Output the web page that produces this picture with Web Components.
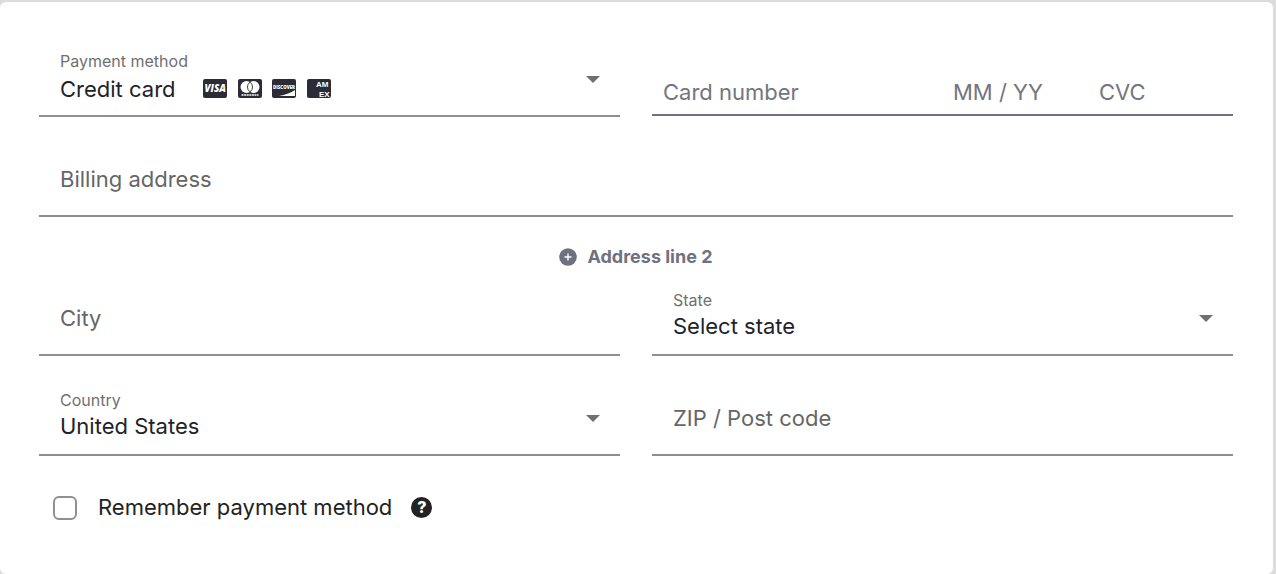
<!DOCTYPE html>
<html lang="en">
<head>
<meta charset="utf-8">
<meta name="viewport" content="width=device-width, initial-scale=1">
<title>Payment method</title>
<style>
  body { margin: 0; background: #dcdcdc; color: #22232a; font: 22px/28px Inter, "Liberation Sans", sans-serif; }
</style>
</head>
<body>
<payment-form></payment-form>
<script>
const define = (name, html, setup) => customElements.define(name, class extends HTMLElement {
  connectedCallback() {
    if (this.shadowRoot) return;
    const template = document.createElement('template');
    template.innerHTML = html;
    this.attachShadow({ mode: 'open' }).append(template.content.cloneNode(true));
    if (setup) setup(this, this.shadowRoot);
  }
});

define('text-field', `
  <style>
    :host { display: block; }
    input { display: block; box-sizing: border-box; width: 100%; height: 76px; margin: 0; padding: 2px 21px 0; border: 0; border-bottom: 2px solid #8f8f8f; border-radius: 0; background: none; color: #22232a; font: inherit; outline: 0; }
    input::placeholder { color: #666; opacity: 1; }
    input:focus { border-color: #22232a; }
  </style>
  <input type="text">`,
  (host, root) => {
    const input = root.querySelector('input');
    input.placeholder = host.getAttribute('label');
    input.setAttribute('aria-label', host.getAttribute('label'));
  });

define('select-field', `
  <style>
    :host { display: block; position: relative; box-sizing: border-box; height: 76px; border-bottom: 2px solid #8f8f8f; padding-top: 10px; --value-height: 32px; }
    label { display: block; padding-left: 21px; font-size: 16px; line-height: 20px; color: #707070; }
    select { display: block; width: 100%; height: var(--value-height); margin: 0; padding: 0 60px 0 21px; border: 0; background: none; appearance: none; color: #22232a; font: inherit; outline: 0; }
    .arrow { position: absolute; right: 20px; top: 35px; width: 14px; height: 7px; fill: #707070; pointer-events: none; }
    slot { display: block; position: absolute; left: 164px; top: 38px; pointer-events: none; }
  </style>
  <label for="choice"></label>
  <select id="choice"><option></option></select>
  <slot></slot>
  <svg class="arrow" viewBox="0 0 14 7" aria-hidden="true"><path d="M0 0h14L7 7z"/></svg>`,
  (host, root) => {
    root.querySelector('label').textContent = host.getAttribute('label');
    root.querySelector('option').textContent = host.getAttribute('value');
  });

define('card-brands', `
  <style>
    :host { display: flex; justify-content: space-between; width: 128px; }
    svg { display: block; width: 24px; height: 19px; overflow: hidden; border-radius: 2px; background: #2b2c35; fill: #fff; }
    text { font-family: "Open Sans", "Liberation Sans", sans-serif; font-weight: 800; }
    .stacked text { font-family: "Liberation Sans", sans-serif; font-weight: 700; }
  </style>
  <svg viewBox="0 0 24 19" role="img" aria-label="Visa"><text x="1.5" y="13.3" font-size="9.8" font-style="italic">VISA</text></svg>
  <svg viewBox="0 0 24 19" role="img" aria-label="Mastercard">
    <circle cx="8.5" cy="8" r="6"/><circle cx="15.5" cy="8" r="6"/>
    <path d="M12 3.1a6 6 0 0 0 0 9.8 6 6 0 0 0 0-9.8z" stroke="#2b2c35" stroke-width=".9"/>
    <path d="M3.5 16h17" stroke="#fff" stroke-width="1.5" stroke-dasharray="2 .6"/>
  </svg>
  <svg viewBox="0 0 24 19" role="img" aria-label="Discover"><text x="1" y="9.5" font-size="4.4">DISCOVER</text><path d="M23 11v6H7q10-2 16-6z"/></svg>
  <svg class="stacked" viewBox="0 0 24 19" role="img" aria-label="American Express"><text x="9" y="8.3" font-size="8">AM</text><text x="12" y="17.6" font-size="8">EX</text></svg>`);

define('card-details', `
  <style>
    :host { display: flex; box-sizing: border-box; height: 75px; padding: 22px 0 0 11px; border-bottom: 2px solid #6f7180; }
    input { box-sizing: border-box; width: 146px; min-width: 0; height: 51px; margin: 0; padding: 6px 0 0; border: 0; background: none; color: #22232a; font: inherit; outline: 0; }
    .number { flex: 1; }
    .code { width: 134px; }
    input::placeholder { color: #737580; opacity: 1; }
  </style>
  <input class="number" type="text" inputmode="numeric" placeholder="Card number" aria-label="Card number">
  <input type="text" inputmode="numeric" placeholder="MM / YY" aria-label="Expiry date">
  <input class="code" type="text" inputmode="numeric" placeholder="CVC" aria-label="Security code">`);

define('add-line-button', `
  <style>
    :host { display: flex; justify-content: center; }
    button { display: flex; align-items: center; gap: 10px; height: 32px; margin: 0; padding: 0; border: 0; background: none; color: #6f7180; font: inherit; font-size: 18px; font-weight: 700; cursor: pointer; }
    svg { width: 18px; height: 18px; }
  </style>
  <button type="button">
    <svg viewBox="0 0 18 18" aria-hidden="true"><circle cx="9" cy="9" r="8.8" fill="#6f7180"/><path d="M9 5.5v7M5.5 9h7" stroke="#fff" stroke-width="1.4"/></svg>
    <slot></slot>
  </button>`);

define('remember-option', `
  <style>
    :host { display: flex; align-items: center; height: 32px; padding-left: 14px; }
    input { appearance: none; box-sizing: border-box; flex: none; width: 24px; height: 24px; margin: 0; border: 2px solid #8f8f96; border-radius: 6px; background: #fff; }
    input:checked { background: #22232a; }
    label { padding: 0 0 2px 21px; color: #222; }
    button { display: block; margin: 0 0 2px 19px; padding: 0; border: 0; border-radius: 50%; width: 21px; height: 21px; background: #222; color: #fff; font: inherit; font-size: 16px; font-weight: 800; line-height: 21px; text-align: center; }
  </style>
  <input type="checkbox" id="remember"><label for="remember"><slot></slot></label>
  <button type="button" aria-label="About remembering payment methods">?</button>`);

define('payment-form', `
  <style>
    :host { display: flex; box-sizing: border-box; min-height: 100vh; padding: 2px 3px 0 0; }
    form { flex: 1; min-width: 0; box-sizing: border-box; display: grid; grid-template-columns: 1fr 1fr; align-content: start; column-gap: 32px; padding: 39px 40px 24px 39px; border-radius: 6px; background: #fff; }
    text-field, select-field, card-details { margin-bottom: 24px; }
    .wide { grid-column: 1 / -1; }
    add-line-button { margin-bottom: 7px; }
    remember-option { margin-top: 12px; }
    .method { --value-height: 36px; }
  </style>
  <form>
    <select-field class="method" label="Payment method" value="Credit card"><card-brands></card-brands></select-field>
    <card-details></card-details>
    <text-field class="wide" label="Billing address"></text-field>
    <add-line-button class="wide">Address line 2</add-line-button>
    <text-field label="City"></text-field>
    <select-field label="State" value="Select state"></select-field>
    <select-field label="Country" value="United States"></select-field>
    <text-field label="ZIP / Post code"></text-field>
    <remember-option class="wide">Remember payment method</remember-option>
  </form>`);
</script>
</body>
</html>
